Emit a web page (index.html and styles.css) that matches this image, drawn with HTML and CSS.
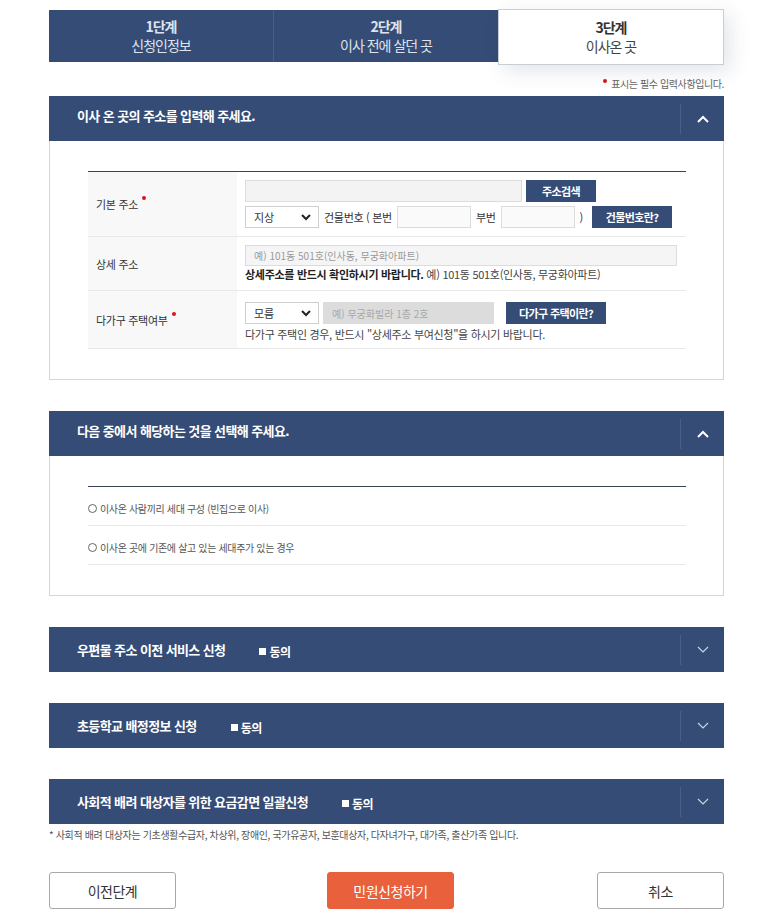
FILE: index.html
```html
<!DOCTYPE html>
<html lang="ko">
<head>
<meta charset="utf-8">
<title>이사온 곳</title>
<link rel="stylesheet" href="styles.css">
</head>
<body>
<div class="page">
  <ul class="steps">
    <li class="step"><strong>1단계</strong><span>신청인정보</span></li>
    <li class="step"><strong>2단계</strong><span>이사 전에 살던 곳</span></li>
    <li class="step active"><strong>3단계</strong><span>이사온 곳</span></li>
  </ul>
  <p class="req-note"><i class="dot"></i>표시는 필수 입력사항입니다.</p>

  <section class="panel first open">
    <div class="panel-head">
      <h2>이사 온 곳의 주소를 입력해 주세요.</h2>
      <span class="toggle"><svg width="12" height="8" viewBox="0 0 12 8"><polyline points="1,7 6,2 11,7" fill="none" stroke="#fff" stroke-width="2"/></svg></span>
    </div>
    <div class="panel-body">
      <div class="form-table">
        <div class="row r1">
          <div class="th">기본 주소<i class="dot sup"></i></div>
          <div class="td">
            <div class="line">
              <input class="inp addr" type="text">
              <button class="btn w70 ml4">주소검색</button>
            </div>
            <div class="line mt4">
              <div class="sel"><span>지상</span><svg width="10" height="7" viewBox="0 0 10 7"><polyline points="1,1 5,5 9,1" fill="none" stroke="#222" stroke-width="2"/></svg></div>
              <span class="txt mx5">건물번호 ( 본번</span>
              <input class="inp num" type="text">
              <span class="txt mx5">부번</span>
              <input class="inp num" type="text">
              <span class="txt ml5">)</span>
              <button class="btn w80 ml9">건물번호란?</button>
            </div>
          </div>
        </div>
        <div class="row r2">
          <div class="th">상세 주소</div>
          <div class="td">
            <input class="inp detail" type="text" placeholder="예) 101동 501호(인사동, 무궁화아파트)">
            <p class="help"><b>상세주소를 반드시 확인하시기 바랍니다.</b> 예) 101동 501호(인사동, 무궁화아파트)</p>
          </div>
        </div>
        <div class="row r3">
          <div class="th">다가구 주택여부<i class="dot sup"></i></div>
          <div class="td">
            <div class="line">
              <div class="sel"><span>모름</span><svg width="10" height="7" viewBox="0 0 10 7"><polyline points="1,1 5,5 9,1" fill="none" stroke="#222" stroke-width="2"/></svg></div>
              <input class="inp multi ml4" type="text" placeholder="예) 무궁화빌라 1층 2호" disabled>
              <button class="btn w100 ml12">다가구 주택이란?</button>
            </div>
            <p class="help mt2">다가구 주택인 경우, 반드시 "상세주소 부여신청"을 하시기 바랍니다.</p>
          </div>
        </div>
      </div>
    </div>
  </section>

  <section class="panel open">
    <div class="panel-head">
      <h2>다음 중에서 해당하는 것을 선택해 주세요.</h2>
      <span class="toggle"><svg width="12" height="8" viewBox="0 0 12 8"><polyline points="1,7 6,2 11,7" fill="none" stroke="#fff" stroke-width="2"/></svg></span>
    </div>
    <div class="panel-body">
      <div class="radio-list">
        <label class="radio-row"><i class="radio"></i>이사온 사람끼리 세대 구성 (빈집으로 이사)</label>
        <label class="radio-row"><i class="radio"></i>이사온 곳에 기존에 살고 있는 세대주가 있는 경우</label>
      </div>
    </div>
  </section>

  <section class="panel">
    <div class="panel-head">
      <h2>우편물 주소 이전 서비스 신청</h2>
      <span class="agree"><i class="sq"></i>동의</span>
      <span class="toggle"><svg width="12" height="7" viewBox="0 0 12 7"><polyline points="1,1 6,6 11,1" fill="none" stroke="#cdd4e0" stroke-width="1.2"/></svg></span>
    </div>
  </section>

  <section class="panel">
    <div class="panel-head">
      <h2>초등학교 배정정보 신청</h2>
      <span class="agree"><i class="sq"></i>동의</span>
      <span class="toggle"><svg width="12" height="7" viewBox="0 0 12 7"><polyline points="1,1 6,6 11,1" fill="none" stroke="#cdd4e0" stroke-width="1.2"/></svg></span>
    </div>
  </section>

  <section class="panel">
    <div class="panel-head">
      <h2>사회적 배려 대상자를 위한 요금감면 일괄신청</h2>
      <span class="agree"><i class="sq"></i>동의</span>
      <span class="toggle"><svg width="12" height="7" viewBox="0 0 12 7"><polyline points="1,1 6,6 11,1" fill="none" stroke="#cdd4e0" stroke-width="1.2"/></svg></span>
    </div>
  </section>
  <p class="foot-note">* 사회적 배려 대상자는 기초생활수급자, 차상위, 장애인, 국가유공자, 보훈대상자, 다자녀가구, 대가족, 출산가족 입니다.</p>

  <div class="actions">
    <button class="act prev">이전단계</button>
    <button class="act submit">민원신청하기</button>
    <button class="act cancel">취소</button>
  </div>
</div>
</body>
</html>
```

FILE: styles.css
```css
* { box-sizing: border-box; margin: 0; padding: 0; }
body {
  font-family: "Noto Sans CJK KR", "Noto Sans", sans-serif;
  color: #333;
  background: #fff;
}
.page { width: 675px; margin-left: 49px; padding-top: 10px; }

/* steps */
.steps { list-style: none; display: flex; align-items: flex-start; height: 52px; }
.step {
  flex: 1 1 0;
  height: 52px;
  background: #354c77;
  color: #dfe4ec;
  display: flex; flex-direction: column; align-items: center; justify-content: center;
  font-size: 14px; line-height: 19px; letter-spacing: -1px;
}
.step + .step { border-left: 1px solid #4a5f87; }
.step strong { font-weight: 700; }
.step.active {
  background: #fff; color: #333;
  border: 1px solid #c9cdd5;
  height: 56px; margin-top: -1px;
  box-shadow: 6px 6px 20px rgba(40, 55, 90, 0.13);
  position: relative; z-index: 1;
}
.step.active span { color: #444; }

.dot { display: inline-block; width: 4px; height: 4px; border-radius: 50%; background: #d8141c; }
.req-note {
  margin-top: 15px; text-align: right;
  font-size: 10px; line-height: 14px; color: #666; letter-spacing: -0.4px;
}
.req-note .dot { vertical-align: top; margin: 2px 4px 0 0; }

/* panels */
.panel { margin-top: 31px; }
.panel.first { margin-top: 5px; }
.panel-head {
  height: 45px; background: #354c77; color: #fff;
  display: flex; align-items: center; padding-left: 28px;
}
.panel-head h2 { font-size: 13px; font-weight: 700; letter-spacing: -0.6px; line-height: 18px; }
.open .panel-head h2 { margin-top: -5px; }
.agree {
  margin-left: 34px; margin-top: 4px;
  font-size: 12px; font-weight: 700; letter-spacing: -0.5px;
  display: inline-flex; align-items: center;
}
.agree .sq { display: inline-block; width: 7px; height: 7px; background: #fff; margin-right: 3px; }
.toggle {
  margin-left: auto; width: 44px; height: 30px;
  border-left: 1px solid #4b6088;
  display: flex; align-items: center; justify-content: center;
}
.panel-body {
  border: 1px solid #d6d6d6; border-top: none;
  padding: 30px 37px 30px 38px;
}

/* form table */
.form-table { border-top: 1px solid #3a4355; }
.row { display: flex; border-bottom: 1px solid #e8e8e8; }
.th {
  width: 149px; flex: none; background: #f8f8f8;
  display: flex; align-items: center; padding-left: 8px;
  font-size: 11px; color: #333; letter-spacing: -0.3px;
}
.th .sup { align-self: center; margin: -12px 0 0 4px; }
.td { flex: 1; padding: 8px 0 8px 8px; font-size: 11px; }
.r3 .td { padding: 11px 0 6px 8px; }
.line { display: flex; align-items: center; height: 22px; }
.mt4 { margin-top: 4px; }
.mt2 { margin-top: 2px; }
.ml4 { margin-left: 4px; }
.ml5 { margin-left: 5px; }
.ml9 { margin-left: 9px; }
.ml12 { margin-left: 12px; }
.mx5 { margin: 0 5px; }
.txt { font-size: 11px; color: #333; letter-spacing: -0.3px; white-space: nowrap; }

.inp {
  height: 22px; border: 1px solid #dcdcdc; background: #f3f3f3;
  font-family: inherit; font-size: 10px; padding: 0 8px; color: #333; outline: none;
}
.inp::placeholder { color: #999; }
.addr { width: 277px; }
.num { width: 74px; background: #fafafa; }
.detail { width: 432px; height: 21px; display: block; background: #f5f5f5; }
.multi { width: 171px; background: #dcdcdc; border-color: #dcdcdc; }
.multi::placeholder { color: #a8a8a8; }

.sel {
  width: 74px; height: 22px; border: 1px solid #cfcfcf; background: #fff;
  display: flex; align-items: center; justify-content: space-between;
  padding: 0 7px 0 8px; font-size: 11px; color: #333;
}
.btn {
  height: 22px; background: #354c77; color: #fff; border: none;
  font-family: inherit; font-size: 11px; font-weight: 700; letter-spacing: -0.6px;
}
.w70 { width: 70px; }
.w80 { width: 80px; }
.w100 { width: 100px; }

.help { font-size: 11px; line-height: 16px; color: #444; letter-spacing: -0.3px; white-space: nowrap; }
.help b { color: #222; font-weight: 700; }

/* radio list */
.radio-list { border-top: 1px solid #3a4355; }
.radio-row {
  display: flex; align-items: center;
  height: 39px; padding-top: 4px;
  border-bottom: 1px solid #e8e8e8;
  font-size: 10px; color: #555; letter-spacing: -0.35px;
}
.radio {
  display: inline-block; width: 9px; height: 9px; border-radius: 50%;
  border: 1px solid #666; margin-right: 3px; background: #fff;
}

.foot-note {
  margin-top: 4px; font-size: 10px; line-height: 14px; color: #555; letter-spacing: -0.35px;
}

/* actions */
.actions { display: flex; margin-top: 30px; }
.act {
  width: 127px; height: 37px; border-radius: 3px;
  font-family: inherit; font-size: 14px; letter-spacing: -0.5px;
  background: #fff; border: 1px solid #a8a8a8; color: #333;
}
.submit { margin-left: 151px; background: #e8603c; border-color: #e8603c; color: #fff; }
.cancel { margin-left: auto; }
```
